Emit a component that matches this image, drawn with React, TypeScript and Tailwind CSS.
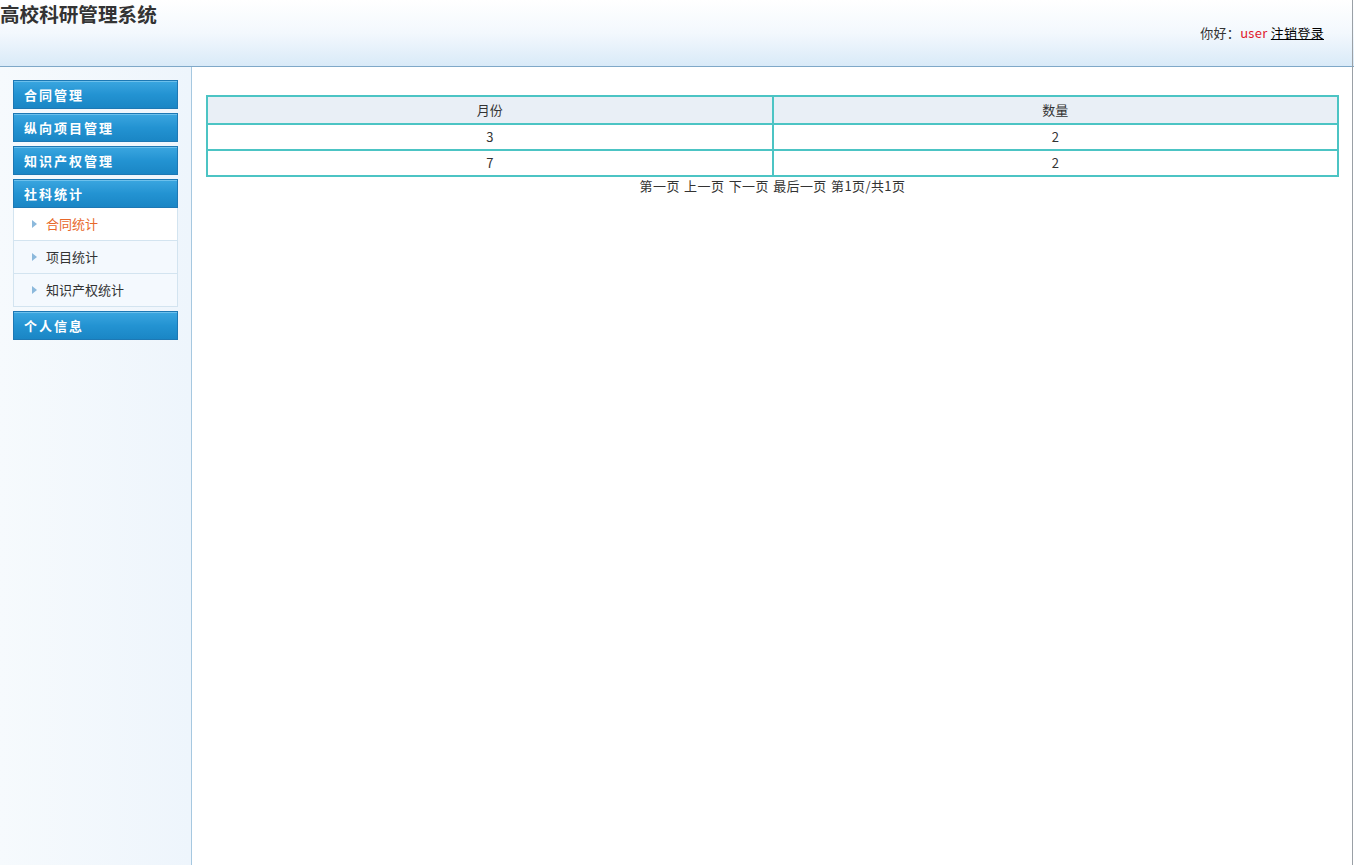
import React from 'react';

const font = "font-['Microsoft_YaHei','Noto_Sans_CJK_SC',sans-serif]";

function MenuHead({ label }: { label: string }) {
  return (
    <div className="h-[29px] border border-[#1d78b4] bg-gradient-to-b from-[#3aa6e0] via-[#2393d2] to-[#1a86c5] flex items-center pl-[10px] text-[13px] font-bold tracking-[2px] text-white shadow-[inset_0_1px_0_#6cc0ec]">
      {label}
    </div>
  );
}

function SubItem({ label, active }: { label: string; active?: boolean }) {
  return (
    <div
      className={`h-[33px] flex items-center pl-[18px] border-b border-[#d3e4f0] text-[13px] ${
        active ? 'bg-white text-[#e8682a]' : 'bg-[#f4f9fe] text-[#333]'
      }`}
    >
      <span className="w-0 h-0 border-y-[4px] border-y-transparent border-l-[5px] border-l-[#8cb9dc] mr-[9px]" />
      {label}
    </div>
  );
}

export default function App() {
  const rows = [
    { month: '3', count: '2' },
    { month: '7', count: '2' },
  ];

  return (
    <div className={`${font} h-[865px] w-[1354px] flex flex-col bg-white text-[#333] overflow-hidden`}>
      {/* header */}
      <div className="h-[67px] shrink-0 border-b border-[#7fa8c8] bg-gradient-to-b from-white via-[#f3f8fd] to-[#d9eaf8] relative flex justify-between pr-[30px]">
        <div className="text-[19.6px] font-bold text-[#333] leading-[26px] pt-px">高校科研管理系统</div>
        <div className="pt-[24px] text-[13px] leading-[18px] text-[#333] tracking-[0.3px]">
          你好：<span className="text-[#e0182c]">user</span>{' '}
          <span className="underline text-black">注销登录</span>
        </div>
      </div>

      <div className="flex flex-1 min-h-0">
        {/* sidebar */}
        <div className="w-[192px] shrink-0 border-r border-[#a6c8e0] bg-gradient-to-r from-[#f6fafd] to-[#eef5fc] pt-[13px] pl-[13px] pr-[13px]">
          <div className="flex flex-col gap-[4px] w-[165px]">
            <MenuHead label="合同管理" />
            <MenuHead label="纵向项目管理" />
            <MenuHead label="知识产权管理" />
            <div className="flex flex-col">
              <MenuHead label="社科统计" />
              <div className="border-x border-[#d3e4f0]">
                <SubItem label="合同统计" active />
                <SubItem label="项目统计" />
                <SubItem label="知识产权统计" />
              </div>
            </div>
            <MenuHead label="个人信息" />
          </div>
        </div>

        {/* main */}
        <div className="flex-1 pt-[28px] pl-[14px] pr-[14px] relative">
          <table className="w-[1133px] border-collapse border-2 border-[#4cc4c4] text-[13px] text-[#333]">
            <thead>
              <tr className="h-[28px] bg-[#e9eff6]">
                <th className="border-2 border-[#4cc4c4] font-normal w-1/2">月份</th>
                <th className="border-2 border-[#4cc4c4] font-normal">数量</th>
              </tr>
            </thead>
            <tbody>
              {rows.map((r, i) => (
                <tr key={i} className="h-[26px]">
                  <td className="border-2 border-[#4cc4c4] text-center">{r.month}</td>
                  <td className="border-2 border-[#4cc4c4] text-center">{r.count}</td>
                </tr>
              ))}
            </tbody>
          </table>
          <div className="w-[1133px] text-center text-[13px] leading-[18px] tracking-[0.4px] [word-spacing:1px]">
            第一页 上一页 下一页 最后一页 第1页/共1页
          </div>
          <div className="absolute right-[1px] top-[-67px] bottom-0 w-px bg-[#9aa0a6]" />
        </div>
      </div>
    </div>
  );
}
